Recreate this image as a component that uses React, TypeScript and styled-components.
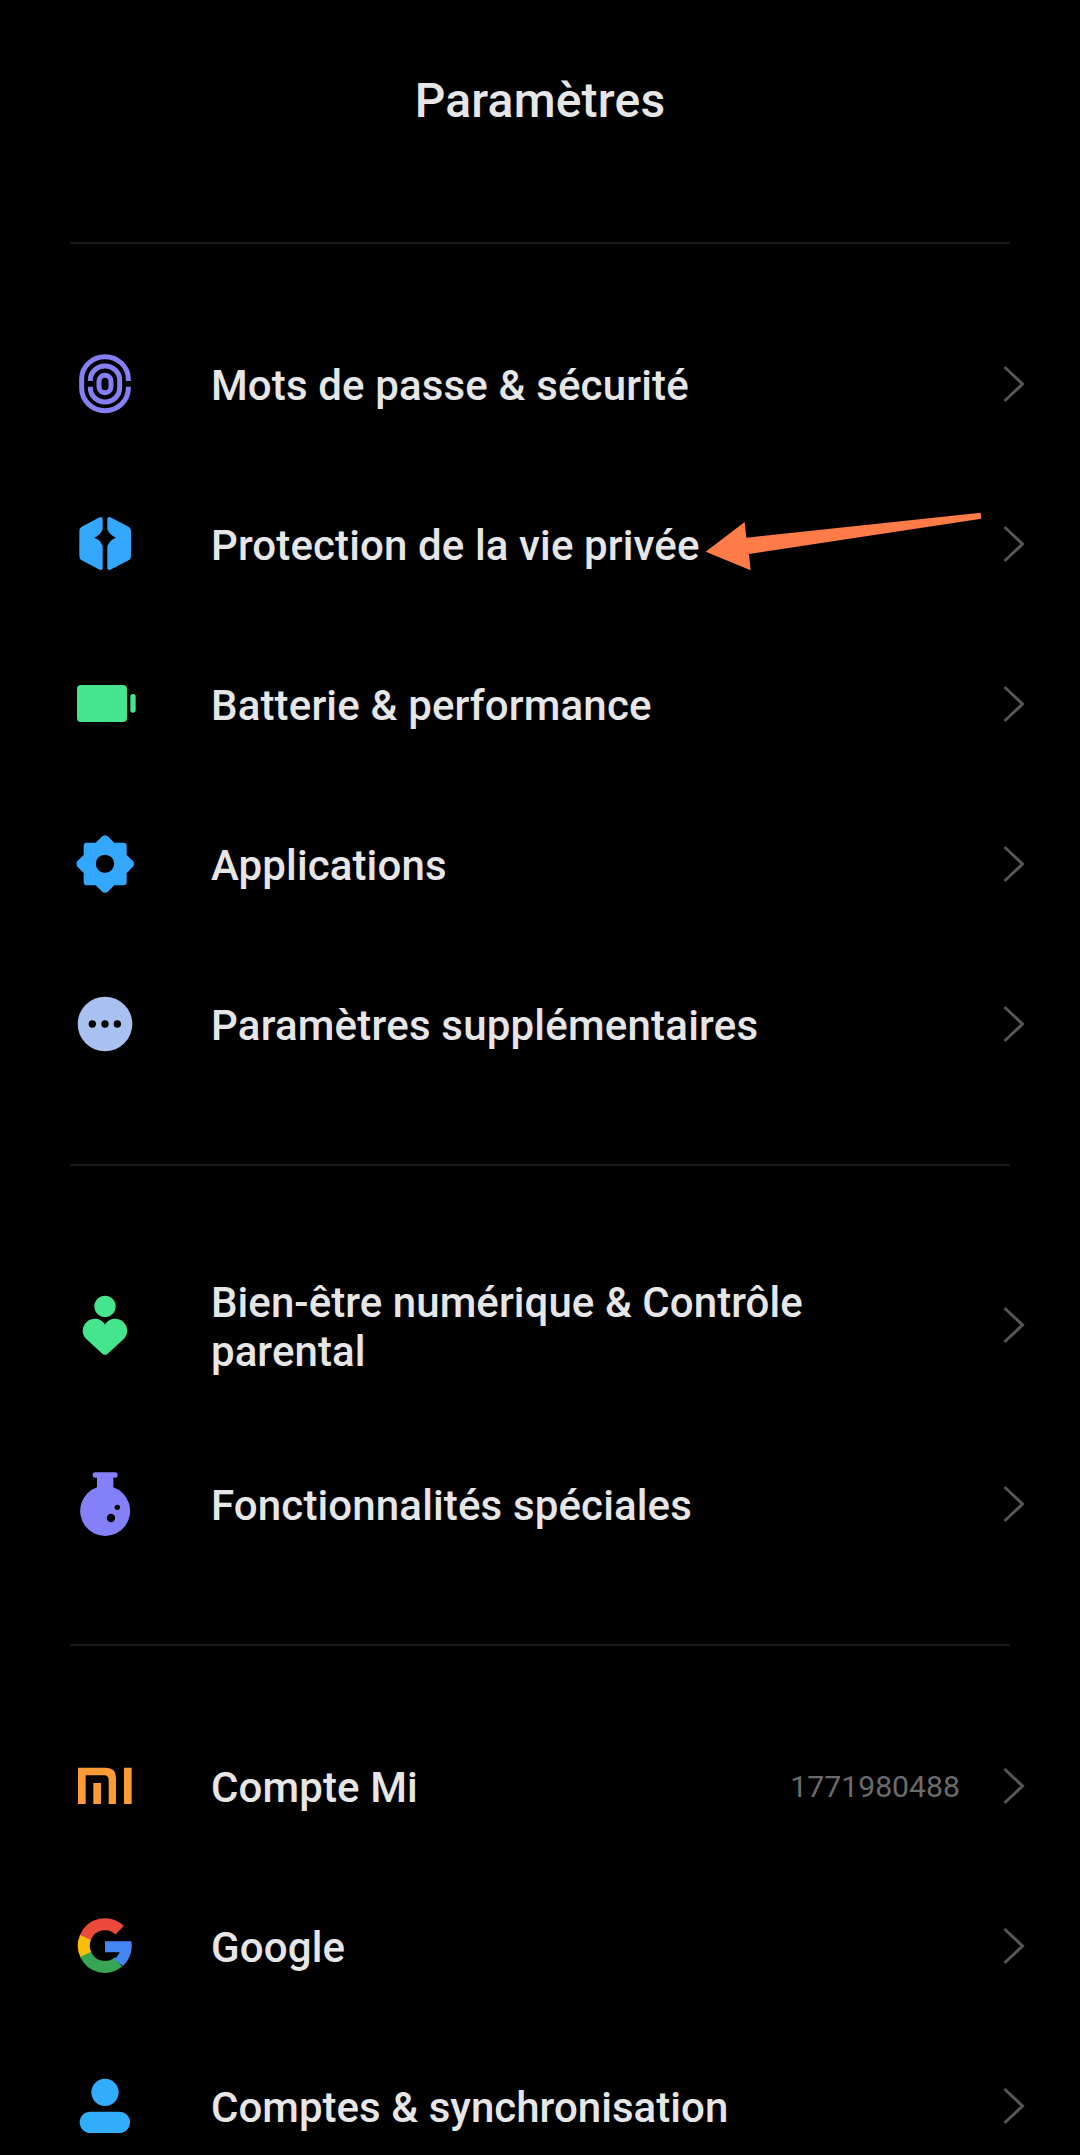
import React from "react";
import styled, { createGlobalStyle } from "styled-components";

const GlobalStyle = createGlobalStyle`
  * { box-sizing: border-box; }
  html, body { margin: 0; background: #000; }
  body { font-family: Roboto, "Noto Sans", sans-serif; }
`;

const Screen = styled.main`
  position: relative;
  width: 1080px;
  height: 2155px;
  overflow: hidden;
  background: #000;
  color: #e6e6e6;
`;

const Header = styled.header`
  display: flex;
  justify-content: center;
  height: 242px;
  padding-top: 73px;
`;

const Title = styled.h1`
  margin: 0;
  font-size: 48px;
  font-weight: 500;
  line-height: 56px;
  letter-spacing: 0.2px;
`;

const Divider = styled.hr`
  height: 2px;
  margin: 0 70px;
  border: 0;
  background: #1a1a1a;
`;

const Section = styled.section`
  display: flex;
  flex-direction: column;
  padding: 60px 0;
`;

const Row = styled.div<{ $tall?: boolean }>`
  display: flex;
  align-items: center;
  height: ${(p) => (p.$tall ? 198 : 160)}px;
  padding: 0 54px 0 60px;
`;

const IconBox = styled.svg`
  flex: none;
  width: 90px;
  height: 90px;
  margin-right: 61px;
`;

const Label = styled.span<{ $tracking: number }>`
  flex: 1;
  padding-top: 3px;
  font-size: 42px;
  font-weight: 500;
  line-height: 49px;
  letter-spacing: ${(p) => p.$tracking}px;
`;

const LabelText = styled.span`
  display: block;
  max-width: 660px;
`;

const Value = styled.span`
  margin-right: 42px;
  color: #6b6b6b;
  font-size: 30.2px;
`;

const Chevron = styled.svg`
  flex: none;
  width: 24px;
  height: 40px;
  fill: none;
  stroke: #565656;
  stroke-width: 3;
`;

const Pointer = styled.svg`
  position: absolute;
  left: 700px;
  top: 506px;
  width: 286px;
  height: 70px;
`;

const icons = {
  fingerprint: (
    <g fill="none" stroke="#8480f4" strokeWidth="15">
      <path d="M205 123V117A70 67 0 0 0 65 117V145A70 67 0 0 0 205 145V140" />
      <path d="M91 123V120A44 42 0 0 1 179 120V144A44 42 0 0 1 91 144V140" />
      <rect x="117" y="106" width="36" height="52" rx="18" />
    </g>
  ),
  privacy: (
    <g fill="#32a7fb">
      <path d="M119 52Q127 48 128 57V88Q121 107 103 113Q121 119 128 138V204Q127 213 119 209L65 181Q58 177 58 169V92Q58 84 65 80Z" />
      <path d="M151 52Q143 48 142 57V88Q150 107 168 113Q150 119 142 138V204Q143 213 151 209L206 181Q213 177 213 169V92Q213 84 206 80Z" />
    </g>
  ),
  battery: (
    <g fill="#45e58e">
      <rect x="51" y="75" width="150" height="111" rx="12" />
      <rect x="211" y="102" width="16" height="56" rx="8" />
    </g>
  ),
  apps: (
    <path
      fill="#32a7fb"
      fillRule="evenodd"
      d="M125 50Q135 41 145 50L163 68H191Q200 68 200 77V105L218 122Q227 131 218 141L200 159V187Q200 196 191 196H163L145 214Q135 223 125 214L107 196H80Q71 196 71 187V159L53 141Q45 131 53 122L71 105V77Q71 68 80 68H107ZM135 104A27.500 27.500 0 1 0 135 159A27.500 27.500 0 1 0 135 104Z"
    />
  ),
  more: (
    <g>
      <circle cx="135" cy="132" r="82" fill="#a9c1f0" />
      <circle cx="97" cy="132" r="11" />
      <circle cx="135" cy="132" r="11" />
      <circle cx="172" cy="132" r="11" />
    </g>
  ),
  wellbeing: (
    <g fill="#45e58e">
      <circle cx="135" cy="79" r="32" />
      <path d="M135 134C123 113 97 112 81 125C65 139 64 161 78 176L127 221Q135 228 143 221L192 176C206 161 205 139 189 125C173 112 147 113 135 134Z" />
    </g>
  ),
  flask: (
    <g fill="#8480f8">
      <rect x="98" y="37" width="75" height="16" rx="8" />
      <path d="M111 45H160V82A75 75 0 1 1 111 82Z" />
      <circle cx="172" cy="142" r="8" fill="#000" />
      <circle cx="153" cy="174" r="12.500" fill="#000" />
    </g>
  ),
  mi: (
    <g fill="#fb9b36">
      <path d="M54 83H138Q168 83 168 113V192H146V120Q146 106 132 106H77V192H54Z" />
      <path d="M100 129H123V192H100ZM192 83H215V192H192Z" />
    </g>
  ),
  google: (
    <g fill="none" strokeWidth="36">
      <path stroke="#eb4a3b" d="M76 113A63 63 0 0 1 179 91" />
      <path stroke="#fbbc0a" d="M76.500 112A63 63 0 0 0 78 165" />
      <path stroke="#38a555" d="M77 163A63 63 0 0 0 175 186" />
      <path fill="#4587f2" stroke="none" d="M135 124H214C219 153 208 180 189 198L162 177Q175 169 179 157H135Z" />
    </g>
  ),
  account: (
    <g fill="#32adfc">
      <circle cx="135" cy="97" r="41" />
      <rect x="59" y="155" width="151" height="64" rx="32" />
    </g>
  ),
};

type Item = {
  icon: keyof typeof icons;
  shift: number;
  label: string;
  tracking: number;
  value?: string;
  tall?: boolean;
};

const sections: Item[][] = [
  [
    { icon: "fingerprint", shift: -3, label: "Mots de passe & sécurité", tracking: 0.14 },
    { icon: "privacy", shift: -3, label: "Protection de la vie privée", tracking: 0.12 },
    { icon: "battery", shift: -3, label: "Batterie & performance", tracking: 0.15 },
    { icon: "apps", shift: -3, label: "Applications", tracking: 0.12 },
    { icon: "more", shift: -3, label: "Paramètres supplémentaires", tracking: 0.21 },
  ],
  [
    {
      icon: "wellbeing",
      shift: 0,
      label: "Bien-être numérique & Contrôle parental",
      tracking: 0.06,
      tall: true,
    },
    { icon: "flask", shift: -3, label: "Fonctionnalités spéciales", tracking: 0.14 },
  ],
  [
    { icon: "mi", shift: 3, label: "Compte Mi", tracking: 0.12, value: "1771980488" },
    { icon: "google", shift: 3, label: "Google", tracking: 0.15 },
    { icon: "account", shift: 3, label: "Comptes & synchronisation", tracking: 0.03 },
  ],
];

function SettingRow({ item }: { item: Item }) {
  return (
    <Row $tall={item.tall}>
      <IconBox viewBox={`0 ${item.shift} 270 270`}>{icons[item.icon]}</IconBox>
      <Label $tracking={item.tracking}>
        <LabelText>{item.label}</LabelText>
      </Label>
      {item.value && <Value>{item.value}</Value>}
      <Chevron viewBox="0 0 24 40">
        <path d="M2.500 3L20.500 20L2.500 37" />
      </Chevron>
    </Row>
  );
}

export default function App() {
  return (
    <>
      <GlobalStyle />
      <Screen>
        <Header>
          <Title>Paramètres</Title>
        </Header>
        {sections.map((items, index) => (
          <React.Fragment key={index}>
            <Divider />
            <Section>
              {items.map((item) => (
                <SettingRow key={item.icon} item={item} />
              ))}
            </Section>
          </React.Fragment>
        ))}
        <Pointer viewBox="60 48 858 210">
          <path fill="#ff7b47" d="M77 185L194 96L199 143L902 68L904 86L207 192L212 241Z" />
        </Pointer>
      </Screen>
    </>
  );
}
